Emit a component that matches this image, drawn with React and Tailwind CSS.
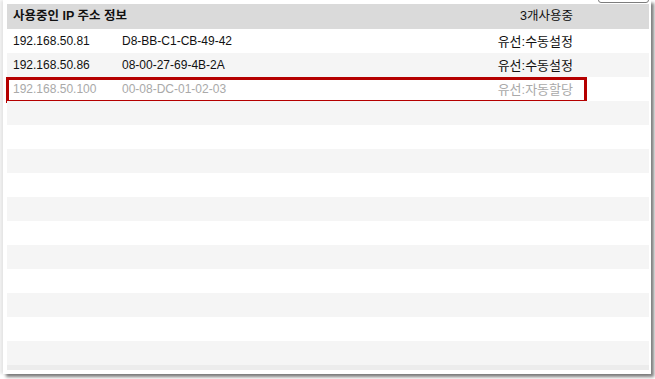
import React from "react";

const rows = [
  { ip: "192.168.50.81", mac: "D8-BB-C1-CB-49-42", type: "유선:수동설정" },
  { ip: "192.168.50.86", mac: "08-00-27-69-4B-2A", type: "유선:수동설정" },
  { ip: "192.168.50.100", mac: "00-08-DC-01-02-03", type: "유선:자동할당", dim: true },
];

const TOTAL_ROWS = 14;

export default function App() {
  const list = Array.from({ length: TOTAL_ROWS }, (_, i) => rows[i] || null);
  return (
    <div
      className="w-[655px] h-[379px] bg-white overflow-hidden text-[12px] leading-none"
      style={{ fontFamily: '"Liberation Sans", Arial, "Noto Sans CJK KR", sans-serif' }}
    >
      <div className="pl-[3px] pr-[4px] pb-[5px] h-full">
        <div className="relative h-full bg-white shadow-[-3px_0_3px_rgba(0,0,0,0.1),3px_3px_3px_rgba(0,0,0,0.5)] pt-[4px] pl-[4px] pr-[2px] pb-[4px] flex flex-col">
          {/* bottom edge of the button above the panel */}
          <div className="absolute top-[-12px] left-[595px] w-[51px] h-[15px] border border-[#7d7d7d] rounded-[3px] bg-white" />

          <div className="h-[25px] bg-[#dadada] flex items-center pl-[6px] pr-[76px] text-[#111]">
            <span className="font-bold flex-1 text-[12.5px]">사용중인 IP 주소 정보</span>
            <span className="w-[90px] text-right text-[12.5px]">3개사용중</span>
          </div>

          <div className="flex flex-col">
            {list.map((r, i) => (
              <div
                key={i}
                className={`relative h-[24px] flex items-center pl-[6px] pr-[76px] ${i % 2 === 1 ? "bg-[#f5f5f5]" : "bg-white"} ${r && r.dim ? "text-[#a9a9a9]" : "text-[#111]"}`}
              >
                {r && (
                  <>
                    <span className="w-[109px]">{r.ip}</span>
                    <span className="flex-1">{r.mac}</span>
                    <span className="w-[90px] text-right text-[13px]">{r.type}</span>
                    {r.dim && (
                      <div className="absolute left-[-1px] top-0 w-[581px] h-[26px] border-[3px] border-[#b50000] pointer-events-none" />
                    )}
                  </>
                )}
              </div>
            ))}
          </div>

          <div className="h-[5px] bg-[#ececec]" />
        </div>
      </div>
    </div>
  );
}
